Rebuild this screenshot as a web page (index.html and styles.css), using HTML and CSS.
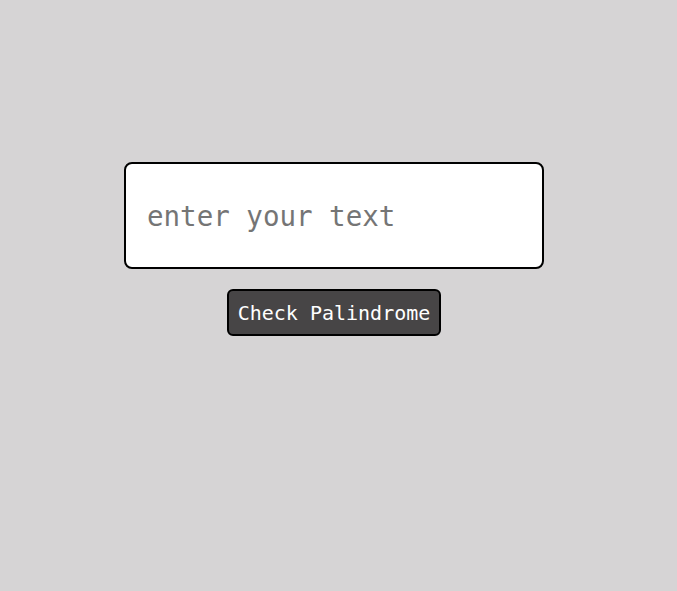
FILE: index.html
```html
<!DOCTYPE html>
<html>
<head>
<meta charset="utf-8">
<link rel="stylesheet" href="styles.css">
</head>
<body>
<main class="wrap">
  <input class="text-input" type="text" placeholder="enter your text">
  <button class="check-btn">Check Palindrome</button>
</main>
</body>
</html>
```
FILE: styles.css
```css
html, body {
  margin: 0;
  padding: 0;
  background: #d6d4d5;
  height: 100%;
}
.wrap {
  display: flex;
  flex-direction: column;
  align-items: center;
  gap: 20px;
  padding-top: 162px;
  padding-right: 9px;
}
.text-input {
  box-sizing: border-box;
  width: 420px;
  height: 107px;
  border: 2px solid #000;
  border-radius: 8px;
  background: #fff;
  padding: 0 20px 0 21px;
  font-family: "DejaVu Sans Mono", monospace;
  font-size: 27.5px;
  color: #000;
  outline: none;
}
.text-input::placeholder {
  color: #757575;
}
.check-btn {
  box-sizing: border-box;
  width: 214px;
  height: 47px;
  border: 2px solid #000;
  border-radius: 6px;
  background: #474546;
  color: #fff;
  font-family: "DejaVu Sans Mono", monospace;
  font-size: 20px;
  padding: 0;
  cursor: pointer;
}
```
